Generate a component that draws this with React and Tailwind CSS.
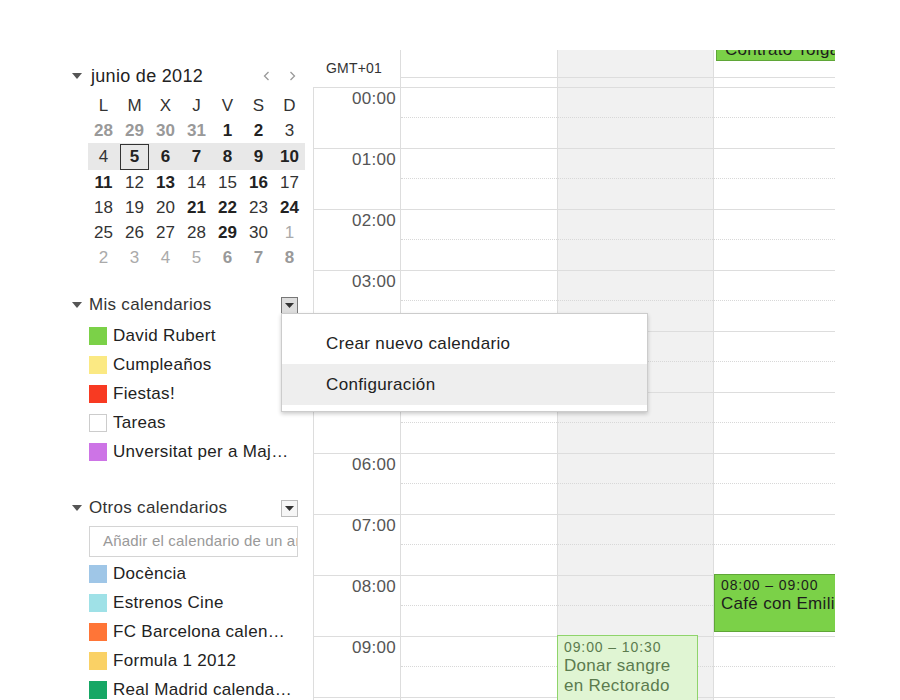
import React from 'react';

const Tri = ({ className = '' }) => (
    <svg className={className} width="10" height="6" viewBox="0 0 10 6">
        <path d="M0 0h10L5 6z" fill="currentColor" />
    </svg>
);

const miniRows = [
    [['28', 'ob'], ['29', 'ob'], ['30', 'ob'], ['31', 'ob'], ['1', 'b'], ['2', 'b'], ['3', 'n']],
    [['4', 'n'], ['5', 'b'], ['6', 'b'], ['7', 'b'], ['8', 'b'], ['9', 'b'], ['10', 'b']],
    [['11', 'b'], ['12', 'n'], ['13', 'b'], ['14', 'n'], ['15', 'n'], ['16', 'b'], ['17', 'n']],
    [['18', 'n'], ['19', 'n'], ['20', 'n'], ['21', 'b'], ['22', 'b'], ['23', 'n'], ['24', 'b']],
    [['25', 'n'], ['26', 'n'], ['27', 'n'], ['28', 'n'], ['29', 'b'], ['30', 'n'], ['1', 'o']],
    [['2', 'o'], ['3', 'o'], ['4', 'o'], ['5', 'o'], ['6', 'ob'], ['7', 'ob'], ['8', 'ob']],
];

const dayStyle = {
    b: 'font-bold text-[#222]',
    n: 'text-[#333]',
    ob: 'font-bold text-[#999]',
    o: 'text-[#aaa]',
};

const misCals = [
    { name: 'David Rubert', color: 'bg-[#7bd148]' },
    { name: 'Cumpleaños', color: 'bg-[#fbe983]' },
    { name: 'Fiestas!', color: 'bg-[#f83a22]' },
    { name: 'Tareas', color: 'bg-white border border-[#ccc]' },
    { name: 'Unversitat per a Majors', color: 'bg-[#cd74e6]' },
];

const otrosCals = [
    { name: 'Docència', color: 'bg-[#9fc6e7]' },
    { name: 'Estrenos Cine', color: 'bg-[#9fe1e7]' },
    { name: 'FC Barcelona calendario', color: 'bg-[#ff7537]' },
    { name: 'Formula 1 2012', color: 'bg-[#fad165]' },
    { name: 'Real Madrid calendario', color: 'bg-[#16a765]' },
];

const hours = ['00:00', '01:00', '02:00', '03:00', '04:00', '05:00', '06:00', '07:00', '08:00', '09:00', '10:00'];

const CalList = ({ items }) => (
    <div className="ml-[21px] w-[205px] flex flex-col">
        {items.map((c) => (
            <div key={c.name} className="h-[29px] flex items-center gap-[6px]">
                <span className={`w-[18px] h-[18px] shrink-0 ${c.color}`} />
                <span className="flex-1 min-w-0 truncate text-[17px] tracking-[0.3px] text-[#222]">{c.name}</span>
            </div>
        ))}
    </div>
);

const SectionHeader = ({ title, pressed }) => (
    <div className="h-6 flex items-center pl-[4px] pr-[7px]">
        <Tri className="text-[#555]" />
        <span className="ml-[7px] text-[17px] tracking-[0.3px] text-[#333]">{title}</span>
        <span
            className={`ml-auto w-[17px] h-[17px] flex items-center justify-center border ${
                pressed ? 'border-[#777] bg-[#ddd]' : 'border-[#bbb] bg-[#f6f6f6]'
            }`}
        >
            <svg width="9" height="5" viewBox="0 0 9 5">
                <path d="M0 0h9L4.5 5z" fill="#333" />
            </svg>
        </span>
    </div>
);

export default function App() {
    return (
        <div className="relative w-[900px] h-[700px] overflow-hidden bg-white flex font-['Liberation_Sans',Arial,sans-serif]">
            {/* Sidebar */}
            <aside className="ml-[68px] mt-[64px] w-[237px] shrink-0 flex flex-col">
                <div className="h-6 flex items-center pl-[4px] pr-[9px]">
                    <Tri className="text-[#555]" />
                    <span className="ml-[9px] text-[18px] tracking-[0.3px] text-[#222]">junio de 2012</span>
                    <span className="ml-auto flex items-center gap-[19px] text-[#999]">
                        <svg width="7" height="10" viewBox="0 0 7 10">
                            <path d="M5.5 1L1.5 5l4 4" stroke="currentColor" strokeWidth="1.3" fill="none" />
                        </svg>
                        <svg width="7" height="10" viewBox="0 0 7 10">
                            <path d="M1.5 1l4 4-4 4" stroke="currentColor" strokeWidth="1.3" fill="none" />
                        </svg>
                    </span>
                </div>

                <div className="mt-[5px] ml-[20px] w-[217px] text-[17px]">
                    <div className="grid grid-cols-7 h-[25px] items-center text-center text-[#333]">
                        {['L', 'M', 'X', 'J', 'V', 'S', 'D'].map((d) => (
                            <span key={d}>{d}</span>
                        ))}
                    </div>
                    {miniRows.map((row, ri) => (
                        <div
                            key={ri}
                            className={`grid grid-cols-7 items-center text-center ${ri === 1 ? 'h-[27px] bg-[#e8e8e8]' : 'h-[25px]'}`}
                        >
                            {row.map(([n, s], ci) => (
                                <span key={ci} className={`flex items-center justify-center ${dayStyle[s]}`}>
                                    {ri === 1 && ci === 1 ? (
                                        <span className="w-[29px] h-[26px] border border-[#333] flex items-center justify-center">{n}</span>
                                    ) : (
                                        n
                                    )}
                                </span>
                            ))}
                        </div>
                    ))}
                </div>

                <div className="mt-[23px]">
                    <SectionHeader title="Mis calendarios" pressed />
                </div>
                <div className="mt-[4px]">
                    <CalList items={misCals} />
                </div>

                <div className="mt-[30px]">
                    <SectionHeader title="Otros calendarios" />
                </div>
                <div className="mt-[6px] ml-[21px] w-[209px] h-[31px] shrink-0 border border-[#d4d4d4] pl-[13px] flex items-center overflow-hidden whitespace-nowrap text-[15px] tracking-[0.2px] text-[#999]">
                    Añadir el calendario de un amigo
                </div>
                <div className="mt-[2px]">
                    <CalList items={otrosCals} />
                </div>
            </aside>

            {/* Main grid */}
            <main className="ml-[8px] mt-[50px] w-[522px] shrink-0 flex flex-col overflow-hidden">
                <div className="h-[28px] flex shrink-0">
                    <div className="w-[87px] shrink-0 flex items-end pb-[2px] pl-[13px] text-[14px] leading-[16px] tracking-[0.2px] text-[#333]">GMT+01</div>
                    <div className="w-[157px] shrink-0 border-l border-b border-[#ddd]" />
                    <div className="w-[156px] shrink-0 border-l border-b border-[#ddd] bg-[#f1f1f1]" />
                    <div className="flex-1 relative border-l border-b border-[#ddd]">
                        <div className="absolute left-[2px] top-[-10px] w-[140px] h-[21px] bg-[#7bd148] border border-[#5fa637] px-[8px] text-[17px] leading-[17px] tracking-[0.3px] text-[#1d1d1d] whitespace-nowrap">
                            Contrato Tolga
                        </div>
                    </div>
                </div>
                <div className="h-[9px] flex shrink-0">
                    <div className="w-[87px] shrink-0" />
                    <div className="w-[157px] shrink-0 border-l border-[#ddd]" />
                    <div className="w-[156px] shrink-0 border-l border-[#ddd] bg-[#f1f1f1]" />
                    <div className="flex-1 border-l border-[#ddd]" />
                </div>

                <div className="relative border-t border-l border-[#ddd]">
                    {hours.map((h) => (
                        <div key={h} className="h-[61px] flex border-b border-[#ddd]">
                            <div className="w-[86px] shrink-0 text-right pr-[4px] pt-[1px] text-[17px] leading-5 tracking-[0.3px] text-[#555]">{h}</div>
                            {['w-[157px] shrink-0', 'w-[156px] shrink-0 bg-[#f1f1f1]', 'flex-1'].map((c, i) => (
                                <div key={i} className={`${c} border-l border-[#ddd]`}>
                                    <div className="h-[30px] border-b border-dotted border-[#d8d8d8]" />
                                </div>
                            ))}
                        </div>
                    ))}

                    {/* Events */}
                    <div className="absolute left-[400px] top-[486px] w-[130px] h-[58px] bg-[#7bd148] border border-[#5fa637] pl-[6px] pt-[2px] text-[#1d1d1d] whitespace-nowrap">
                        <div className="text-[14px] leading-[17px] tracking-[0.9px]">08:00 – 09:00</div>
                        <div className="text-[17px] leading-[20px] tracking-[0.3px]">Café con Emilio</div>
                    </div>
                    <div className="absolute left-[243px] top-[547px] w-[141px] h-[100px] bg-[#e0f5d3] border border-[#8fd46b] pl-[6px] pt-[3px] text-[#5b7b4e]">
                        <div className="text-[14px] leading-[17px] tracking-[0.9px]">09:00 – 10:30</div>
                        <div className="text-[17px] leading-[20px] tracking-[0.3px]">Donar sangre<br />en Rectorado</div>
                    </div>
                </div>
            </main>

            {/* Dropdown menu */}
            <div className="absolute left-[281px] top-[313px] w-[367px] h-[99px] bg-white border border-[#ccc] shadow-[0_2px_4px_rgba(0,0,0,0.2)] pt-[9px] text-[17px] tracking-[0.35px] text-[#222]">
                <div className="h-[41px] flex items-center pl-[44px]">Crear nuevo calendario</div>
                <div className="h-[41px] flex items-center pl-[44px] bg-[#eeeeee]">Configuración</div>
            </div>
        </div>
    );
}
